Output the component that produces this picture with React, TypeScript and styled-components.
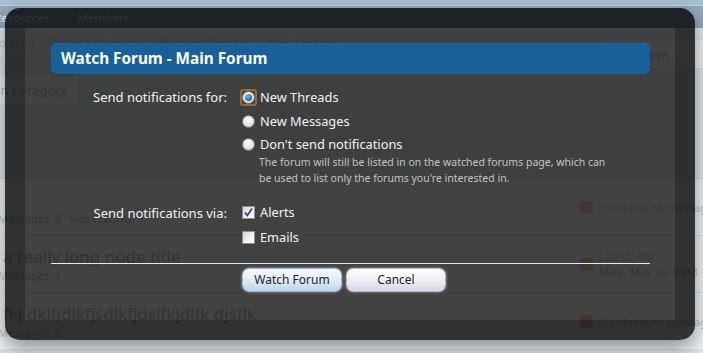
import React from "react";
import styled, { createGlobalStyle } from "styled-components";

const GlobalStyle = createGlobalStyle`
  html, body {
    margin: 0;
    padding: 0;
  }
  body {
    background: #e4e7ea;
    font-family: "Noto Sans", "Liberation Sans", sans-serif;
  }
  #root {
    position: relative;
    width: 703px;
    height: 353px;
    overflow: hidden;
  }
`;

/* ---------- page behind the overlay ---------- */

const Page = styled.div`
  margin-left: -20px;
  width: 760px;
  display: flex;
  flex-direction: column;
  color: #b4c1cb;
`;

const TopStrip = styled.div`
  height: 5px;
  background: #a9c1d6;
  border-bottom: 1px solid #c8d4df;
`;

const NavBar = styled.div`
  height: 22px;
  background: #93a9bd;
  display: flex;
  align-items: center;
  gap: 28px;
  padding-left: 14px;
  font-size: 11.5px;
  color: #f2f6fa;
`;

const SubNav = styled.div`
  height: 29px;
  background: #e6ecf1;
  display: flex;
  align-items: center;
  gap: 16px;
  padding-left: 13px;
  font-size: 11.5px;
  color: #c2ccd4;
`;

const Search = styled.div`
  margin-left: auto;
  margin-right: 20px;
  align-self: flex-start;
  margin-top: 11px;
  width: 120px;
  height: 30px;
  flex: none;
  background: #f3f5f7;
  border: 1px solid #d9dfe4;
  font-size: 12px;
  font-style: italic;
  color: #b5bdc4;
  padding: 7px 0 0 32px;
  box-sizing: border-box;
`;

const Breadcrumb = styled.div`
  margin-top: 18px;
  margin-left: -12px;
  height: 28px;
  width: 100px;
  padding-left: 10px;
  display: flex;
  align-items: center;
  font-size: 13px;
  color: #b9c4cc;
  background: #eef2f5;
  border: 1px solid #dde3e8;
  border-left: none;
`;

const NodeList = styled.div`
  margin-top: 73px;
  display: flex;
  flex-direction: column;
  border-top: 1px solid #d5dde4;
`;

const NodeRow = styled.div`
  height: 56px;
  display: grid;
  grid-template-columns: 1fr 160px;
  border-bottom: 1px solid #dde4ea;
  background: #f3f5f7;
`;

const NodeMain = styled.div`
  display: flex;
  flex-direction: column;
  justify-content: center;
  padding-left: 23px;
`;

const NodeTitle = styled.div`
  font-size: 17px;
  color: #aebcc7;
`;

const NodeMeta = styled.div`
  font-size: 11px;
  color: #bcc6ce;
  margin-left: -5px;
`;

const NodeLast = styled.div`
  display: flex;
  align-items: center;
  gap: 6px;
  font-size: 11px;
  color: #bcc6ce;
`;

const Feed = styled.div`
  width: 13px;
  height: 13px;
  border-radius: 2px;
  background: #ecc9a6;
`;

/* ---------- overlay ---------- */

const Overlay = styled.div`
  position: absolute;
  left: 5px;
  top: 8px;
  width: 690px;
  height: 332px;
  box-sizing: border-box;
  border: 20px solid rgba(0, 0, 0, 0.8);
  border-radius: 15px;
  background: rgba(0, 0, 0, 0.73);
  background-clip: padding-box;
  box-shadow: 0 8px 22px rgba(0, 0, 0, 0.45);
`;

const Content = styled.div`
  padding: 15px 25px 0 26px;
  color: #f2f2f2;
`;

const Heading = styled.h2`
  margin: 0;
  height: 31px;
  padding: 0 10px;
  border-radius: 5px;
  background: #18609a;
  color: #fff;
  font-size: 15.3px;
  font-weight: bold;
  line-height: 31px;
`;

const Unit = styled.div<{ $gap: number }>`
  display: grid;
  grid-template-columns: 176px 1fr;
  column-gap: 15px;
  margin-top: ${(p) => p.$gap}px;
`;

const Label = styled.div<{ $pad: number }>`
  text-align: right;
  font-size: 13px;
  line-height: 17.5px;
  padding-top: ${(p) => p.$pad}px;
`;

const Options = styled.div`
  display: flex;
  flex-direction: column;
`;

const Option = styled.div<{ $h: number }>`
  display: flex;
  align-items: flex-start;
  gap: 5px;
  padding: ${(p) => (p.$h - 17.5) / 2}px 0;
  font-size: 12.8px;
  line-height: 17.5px;
`;

const Text = styled.div`
  display: flex;
  flex-direction: column;
`;

const Explain = styled.div`
  font-size: 10.5px;
  line-height: 16px;
  color: #c4c4c4;
  margin-left: -1px;
`;

const Radio = styled.span<{ $on?: boolean }>`
  position: relative;
  flex: none;
  width: 13px;
  height: 13px;
  margin-top: 2px;
  outline: ${(p) => (p.$on ? "2px solid #96692a" : "none")};
  outline-offset: 0px;
  border-radius: 1px;

  &::before {
    content: "";
    position: absolute;
    inset: 0;
    box-sizing: border-box;
    border-radius: 50%;
    border: 1px solid #7c7c7c;
    background: radial-gradient(circle at 45% 35%, #ffffff 0%, #e4e4e4 55%, #b9b9b9 100%);
  }

  &::after {
    content: "";
    display: ${(p) => (p.$on ? "block" : "none")};
    position: absolute;
    left: 3px;
    top: 3px;
    width: 7px;
    height: 7px;
    border-radius: 50%;
    background: radial-gradient(circle at 40% 35%, #6ccaf5 0%, #1f86c6 50%, #0b3f66 100%);
  }
`;

const Box = styled.span`
  flex: none;
  width: 13px;
  height: 13px;
  margin-top: 2px;
  box-sizing: border-box;
  border: 1px solid #8c8c8c;
  background: linear-gradient(135deg, #d6d6d6 0%, #f4f4f4 60%, #ffffff 100%);
  display: flex;
  align-items: center;
  justify-content: center;
`;

const Rule = styled.div`
  margin-top: 12px;
  height: 1px;
  background: #e2eaf2;
`;

const Buttons = styled.div`
  display: flex;
  gap: 4px;
  margin-top: 4px;
  padding-left: 191px;
`;

const Button = styled.button<{ $primary?: boolean }>`
  width: 100px;
  height: 24px;
  border-radius: 7px;
  border: 1px solid ${(p) => (p.$primary ? "#9fb9cf" : "#b7b7c6")};
  background: ${(p) =>
    p.$primary
      ? "linear-gradient(#f5f9fc, #e3eef7 45%, #bcd6ea)"
      : "linear-gradient(#ffffff, #f1f1f6 45%, #d8d8e6)"};
  box-shadow: 0 0 3px rgba(255, 255, 255, 0.55);
  font-family: "Noto Sans", "Liberation Sans", sans-serif;
  font-size: 12px;
  color: #1e1e1e;
  padding: 0;
`;

const Check = () => (
  <svg width="11" height="11" viewBox="0 0 11 11">
    <path d="M2 5.5 L4.3 8.5 L9 1.5" fill="none" stroke="#33409a" strokeWidth="1.8" />
  </svg>
);

export default function App() {
  return (
    <>
      <GlobalStyle />
      <Page>
        <TopStrip />
        <NavBar>
          <span>Resources</span>
          <span>Members</span>
        </NavBar>
        <SubNav>
          <span>Forums</span>
          <span>Watched Forums</span>
          <span>Watched Threads</span>
          <span>New Threads</span>
          <Search>Search...</Search>
        </SubNav>
        <Breadcrumb>Main Category</Breadcrumb>
        <NodeList>
          <NodeRow>
            <NodeMain>
              <NodeTitle>&nbsp;</NodeTitle>
              <NodeMeta>Messages: 0 &nbsp; Sub-Forums: 1</NodeMeta>
            </NodeMain>
            <NodeLast>
              <Feed />
              <span>(Contains no messages)</span>
            </NodeLast>
          </NodeRow>
          <NodeRow>
            <NodeMain>
              <NodeTitle>a really long node title</NodeTitle>
              <NodeMeta>Messages: 1</NodeMeta>
            </NodeMain>
            <NodeLast>
              <Feed />
              <span>
                Latest: dfg
                <br />
                Mike, May 20, 2013
              </span>
            </NodeLast>
          </NodeRow>
          <NodeRow>
            <NodeMain>
              <NodeTitle>fkj dklfjdlkfjsdlkfjdslfkjdlfk djsflk</NodeTitle>
              <NodeMeta>Messages: 0</NodeMeta>
            </NodeMain>
            <NodeLast>
              <Feed />
              <span>(Contains no messages)</span>
            </NodeLast>
          </NodeRow>
        </NodeList>
      </Page>

      <Overlay>
        <Content>
          <Heading>Watch Forum - Main Forum</Heading>

          <Unit $gap={12}>
            <Label $pad={3}>Send notifications for:</Label>
            <Options>
              <Option $h={23.5}>
                <Radio $on />
                <Text>New Threads</Text>
              </Option>
              <Option $h={23.5}>
                <Radio />
                <Text>New Messages</Text>
              </Option>
              <Option $h={23.5}>
                <Radio />
                <Text>
                  Don't send notifications
                  <Explain>
                    The forum will still be listed in on the watched forums page, which can
                    <br />
                    be used to list only the forums you're interested in.
                  </Explain>
                </Text>
              </Option>
            </Options>
          </Unit>

          <Unit $gap={12}>
            <Label $pad={4}>Send notifications via:</Label>
            <Options>
              <Option $h={25}>
                <Box>
                  <Check />
                </Box>
                <Text>Alerts</Text>
              </Option>
              <Option $h={25}>
                <Box />
                <Text>Emails</Text>
              </Option>
            </Options>
          </Unit>

          <Rule />
          <Buttons>
            <Button $primary>Watch Forum</Button>
            <Button>Cancel</Button>
          </Buttons>
        </Content>
      </Overlay>
    </>
  );
}
